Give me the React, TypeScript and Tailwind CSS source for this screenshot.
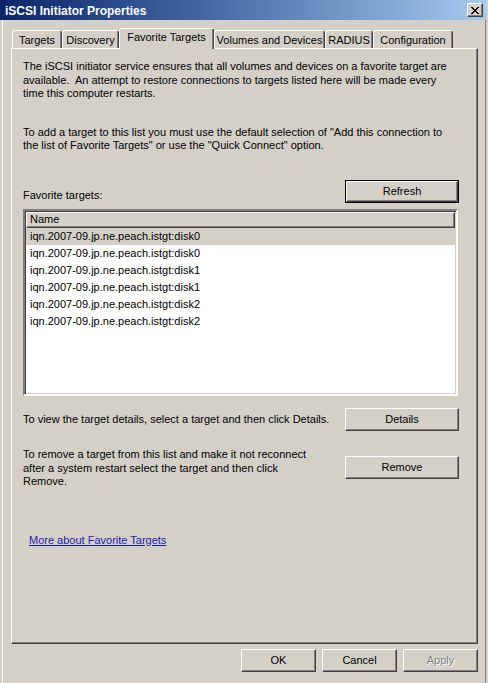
import React from "react";

const raised =
  "border border-t-white border-l-white border-r-[#404040] border-b-[#404040] shadow-[inset_-1px_-1px_0_#808080]";

function Btn({
  label,
  w,
  isDefault = false,
  disabled = false,
}: {
  label: string;
  w: string;
  isDefault?: boolean;
  disabled?: boolean;
}) {
  if (isDefault) {
    return (
      <div className={`${w} h-[23px] border border-black flex`}>
        <div className={`flex-1 ${raised} flex items-center justify-center bg-[#d4d0c8]`}>
          <span>{label}</span>
        </div>
      </div>
    );
  }
  return (
    <div className={`${w} h-[23px] ${raised} flex items-center justify-center bg-[#d4d0c8]`}>
      {disabled ? (
        <span className="text-[#808080] [text-shadow:1px_1px_0_#ffffff]">{label}</span>
      ) : (
        <span>{label}</span>
      )}
    </div>
  );
}

function CloseX() {
  const px: [number, number][] = [];
  const rows = [
    "XX....XX",
    ".XX..XX.",
    "..XXXX..",
    "...XX...",
    "..XXXX..",
    ".XX..XX.",
    "XX....XX",
  ];
  rows.forEach((r, y) =>
    r.split("").forEach((c, x) => {
      if (c === "X") px.push([x, y]);
    })
  );
  return (
    <svg width="8" height="7" viewBox="0 0 8 7" shapeRendering="crispEdges">
      {px.map(([x, y]) => (
        <rect key={`${x}-${y}`} x={x} y={y} width="1" height="1" fill="#000" />
      ))}
    </svg>
  );
}

const tabs: { label: string; cls: string; sel?: boolean }[] = [
  { label: "Targets", cls: "w-[50px]" },
  { label: "Discovery", cls: "w-[57px]" },
  { label: "Favorite Targets", cls: "w-[95px]", sel: true },
  { label: "Volumes and Devices", cls: "w-[111px]" },
  { label: "RADIUS", cls: "w-[48px]" },
  { label: "Configuration", cls: "w-[80px]" },
];

const rows = [
  "iqn.2007-09.jp.ne.peach.istgt:disk0",
  "iqn.2007-09.jp.ne.peach.istgt:disk0",
  "iqn.2007-09.jp.ne.peach.istgt:disk1",
  "iqn.2007-09.jp.ne.peach.istgt:disk1",
  "iqn.2007-09.jp.ne.peach.istgt:disk2",
  "iqn.2007-09.jp.ne.peach.istgt:disk2",
];

export default function App() {
  return (
    <div className="w-[488px] h-[683px] bg-[#d4d0c8] font-['Liberation_Sans',Arial,sans-serif] text-[11px] text-black flex flex-col overflow-hidden">
      {/* Title bar */}
      <div className="h-[20px] w-[486px] bg-gradient-to-r from-[#0a246a] to-[#a6caf0] flex items-center pl-[5px] pr-[3px] shrink-0">
        <span className="flex-1 text-white font-bold text-[12px] leading-none pt-[1px]">
          iSCSI Initiator Properties
        </span>
        <div className={`w-[16px] h-[14px] ${raised} bg-[#d4d0c8] flex items-center justify-center`}>
          <CloseX />
        </div>
      </div>

      {/* Body */}
      <div className="flex-1 ml-[2px] w-[484px] border-l border-white border-r border-r-[#808080] pl-[8px] pt-[8px]">
        {/* Tabs */}
        <div className="flex items-end h-[21px] -mb-px ml-[1px]">
          {tabs.map((t) =>
            t.sel ? (
              <div
                key={t.label}
                className={`${t.cls} h-[21px] relative z-10 bg-[#d4d0c8] border-t border-l border-white border-r border-r-[#404040] shadow-[inset_-1px_0_0_#808080] rounded-t-[3px] flex items-center justify-center pb-[3px] whitespace-nowrap`}
              >
                {t.label}
              </div>
            ) : (
              <div
                key={t.label}
                className={`${t.cls} h-[19px] bg-[#d4d0c8] border-t border-l border-white border-r border-r-[#404040] shadow-[inset_-1px_0_0_#808080] rounded-t-[3px] flex items-center justify-center pt-[1px] whitespace-nowrap`}
              >
                {t.label}
              </div>
            )
          )}
        </div>

        {/* Panel */}
        <div className="relative w-[467px] h-[596px] bg-[#d4d0c8] border-t border-l border-white border-r border-b border-r-[#404040] border-b-[#404040] shadow-[inset_-1px_-1px_0_#808080] pl-[11px] pr-[18px] pt-[11px] leading-[13.5px]">
          <p className="whitespace-pre">
            The iSCSI initiator service ensures that all volumes and devices on a favorite target are
            <br />
            available.  An attempt to restore connections to targets listed here will be made every
            <br />
            time this computer restarts.
          </p>
          <p className="mt-[25px] whitespace-pre">
            To add a target to this list you must use the default selection of "Add this connection to
            <br />
            the list of Favorite Targets" or use the "Quick Connect" option.
          </p>

          <div className="mt-[27.5px] flex items-end justify-between">
            <span className="mb-[1px]">Favorite targets:</span>
            <Btn label="Refresh" w="w-[114px]" isDefault />
          </div>

          {/* List */}
          <div className="mt-[6px] w-[435px] h-[187px] bg-white border-2 border-t-[#808080] border-l-[#808080] border-b-white border-r-white shadow-[inset_1px_1px_0_#404040,inset_-1px_-1px_0_#d4d0c8] p-px overflow-hidden">
            <div className={`h-[16px] ${raised} bg-[#d4d0c8] flex items-center pl-[3px]`}>
              Name
            </div>
            {rows.map((r, i) =>
              i === 0 ? (
                <div key={i} className="h-[17px] bg-[#d4d0c8] flex items-center pl-[4px]">
                  {r}
                </div>
              ) : (
                <div key={i} className="h-[17px] flex items-center pl-[4px]">
                  {r}
                </div>
              )
            )}
          </div>

          <div className="mt-[12px] flex items-center justify-between">
            <span>To view the target details, select a target and then click Details.</span>
            <Btn label="Details" w="w-[114px]" />
          </div>

          <div className="mt-[17px] flex items-start justify-between">
            <p className="whitespace-pre">
              To remove a target from this list and make it not reconnect
              <br />
              after a system restart select the target and then click
              <br />
              Remove.
            </p>
            <div className="mt-[8px]">
              <Btn label="Remove" w="w-[114px]" />
            </div>
          </div>

          <div className="mt-[45.5px] pl-[6px]">
            <span className="text-[#1c1cb0] underline">More about Favorite Targets</span>
          </div>
        </div>

        {/* Bottom buttons */}
        <div className="w-[467px] mt-[5px] flex justify-end gap-[6px]">
          <Btn label="OK" w="w-[75px]" />
          <Btn label="Cancel" w="w-[75px]" />
          <Btn label="Apply" w="w-[75px]" disabled />
        </div>
      </div>
    </div>
  );
}
